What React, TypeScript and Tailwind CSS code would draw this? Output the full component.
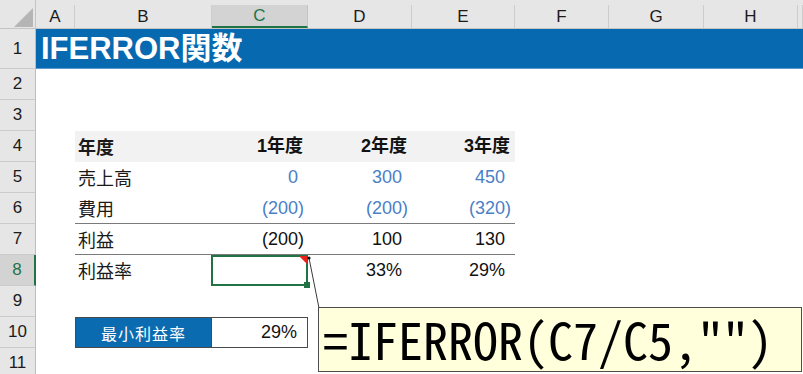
import React from "react";

const colLetters = ["A", "B", "C", "D", "E", "F", "G", "H", ""];
const rowNums = [1, 2, 3, 4, 5, 6, 7, 8, 9, 10, 11];

const sans = "font-['Liberation_Sans','Noto_Sans_CJK_JP',sans-serif]";
const blue = "text-[#4a80c6]";

function Num({ v, className = "" }: { v: string; className?: string }) {
  const neg = v.startsWith("(");
  return (
    <div className={`flex items-center justify-end pr-[4px] text-[18px] ${sans} ${className}`}>
      <span>{v}</span>
      {!neg && <span className="invisible">)</span>}
    </div>
  );
}

function Label({ t, bold = false, className = "" }: { t: string; bold?: boolean; className?: string }) {
  return (
    <div
      className={`flex items-center pl-[3px] text-[18px] text-[#1a1a1a] font-['Noto_Sans_CJK_JP',sans-serif] ${bold ? "font-bold" : "font-normal"} ${className}`}
    >
      {t}
    </div>
  );
}

function Head({ t, className = "" }: { t: string; className?: string }) {
  return (
    <div className={`flex items-center justify-end pr-[5px] text-[18px] font-bold text-[#111] ${sans} ${className}`}>
      {t}
    </div>
  );
}

function Empty() {
  return <div />;
}

function bodyCells(r: number): React.ReactNode[] {
  // columns A..(last): index 0..8
  const cells: React.ReactNode[] = Array.from({ length: 9 }, (_, i) => <Empty key={`e${r}-${i}`} />);
  const k = (c: number) => `c${r}-${c}`;
  if (r === 4) {
    cells[1] = <Label key={k(1)} t="年度" bold className="bg-[#f2f2f2]" />;
    cells[2] = <Head key={k(2)} t="1年度" className="bg-[#f2f2f2]" />;
    cells[3] = <Head key={k(3)} t="2年度" className="bg-[#f2f2f2]" />;
    cells[4] = <Head key={k(4)} t="3年度" className="bg-[#f2f2f2]" />;
  }
  if (r === 5) {
    cells[1] = <Label key={k(1)} t="売上高" />;
    cells[2] = <Num key={k(2)} v="0" className={blue} />;
    cells[3] = <Num key={k(3)} v="300" className={blue} />;
    cells[4] = <Num key={k(4)} v="450" className={blue} />;
  }
  if (r === 6) {
    const b = "border-b border-[#7a7a7a]";
    cells[1] = <Label key={k(1)} t="費用" className={b} />;
    cells[2] = <Num key={k(2)} v="(200)" className={`${blue} ${b}`} />;
    cells[3] = <Num key={k(3)} v="(200)" className={`${blue} ${b}`} />;
    cells[4] = <Num key={k(4)} v="(320)" className={`${blue} ${b}`} />;
  }
  if (r === 7) {
    const b = "border-b border-[#7a7a7a]";
    cells[1] = <Label key={k(1)} t="利益" className={b} />;
    cells[2] = <Num key={k(2)} v="(200)" className={`text-[#111] ${b}`} />;
    cells[3] = <Num key={k(3)} v="100" className={`text-[#111] ${b}`} />;
    cells[4] = <Num key={k(4)} v="130" className={`text-[#111] ${b}`} />;
  }
  if (r === 8) {
    cells[1] = <Label key={k(1)} t="利益率" />;
    cells[2] = (
      <div key={k(2)} className="relative border-2 border-[#217346] -ml-[1px]">
        {/* comment marker */}
        <div className="absolute right-[-1px] top-[-1px] h-0 w-0 border-l-[8px] border-t-[8px] border-l-transparent border-t-[#e8221b]" />
        {/* fill handle */}
        <div className="absolute right-[-4px] bottom-[-4px] h-[6px] w-[6px] bg-[#217346]" />
      </div>
    );
    cells[3] = <Num key={k(3)} v="33%" className="text-[#111]" />;
    cells[4] = <Num key={k(4)} v="29%" className="text-[#111]" />;
  }
  if (r === 10) {
    cells[1] = (
      <div
        key={k(1)}
        className="flex items-center justify-center bg-[#0b6bb1] border border-[#4a4a4a] text-white text-[16px] tracking-[1px] font-['Noto_Sans_CJK_JP',sans-serif]"
      >
        最小利益率
      </div>
    );
    cells[2] = <Num key={k(2)} v="29%" className="text-[#111] border border-l-0 border-[#4a4a4a]" />;
  }
  return cells;
}

export default function App() {
  return (
    <div className="relative w-[803px] h-[374px] overflow-hidden bg-white">
      <div className="grid grid-cols-[36px_39px_137px_96px_104px_103px_94px_95px_94px_1fr] grid-rows-[29px_40px_repeat(10,31px)]">
        {/* corner */}
        <div className="relative bg-[#e6e6e6] border-r border-b border-[#c4c4c4]">
          <svg className="absolute left-[14px] top-[8px]" width="20" height="19" viewBox="0 0 20 19">
            <polygon points="19,0 19,19 0,19" fill="#b5b5b5" />
          </svg>
        </div>
        {/* column headers */}
        {colLetters.map((l, i) => {
          const sel = l === "C";
          return (
            <div key={`h${i}`} className="bg-[#e6e6e6] pt-[5px] border-b border-[#c4c4c4]">
              <div
                className={`h-full flex items-center justify-center text-[17px] ${sans} ${
                  sel
                    ? "bg-[#d3d3d3] text-[#217346] border-b-2 border-[#217346] border-r border-r-[#c4c4c4]"
                    : "text-[#1b1b1b] border-r border-[#cdcdcd]"
                }`}
              >
                {l}
              </div>
            </div>
          );
        })}
        {rowNums.map((r) => {
          const sel = r === 8;
          const header = (
            <div
              key={`rh${r}`}
              className={`flex items-center justify-center text-[17px] ${sans} border-b border-[#cbcbcb] ${
                sel
                  ? "bg-[#d3d3d3] text-[#217346] border-r-2 border-r-[#217346]"
                  : "bg-[#e6e6e6] text-[#1b1b1b] border-r border-r-[#bdbdbd]"
              }`}
            >
              {r}
            </div>
          );
          if (r === 1) {
            return (
              <React.Fragment key={`r${r}`}>
                {header}
                <div className="col-span-9 flex items-center pl-[5px] bg-[#076ab0] border-b border-[#5b9ad0] text-white text-[31px] font-bold leading-none font-['Liberation_Sans','Noto_Sans_CJK_JP',sans-serif]">
                  IFERROR関数
                </div>
              </React.Fragment>
            );
          }
          return (
            <React.Fragment key={`r${r}`}>
              {header}
              {bodyCells(r)}
            </React.Fragment>
          );
        })}
      </div>

      {/* comment leader line */}
      <svg className="absolute left-0 top-0 pointer-events-none" width="803" height="374">
        <line x1="309" y1="258" x2="319" y2="308" stroke="#3a3a3a" strokeWidth="1" />
        <circle cx="309" cy="258" r="1.6" fill="#111" />
      </svg>

      {/* comment note */}
      <div className="absolute left-[318px] top-[307px] w-[484px] h-[65px] bg-[#ffffdc] border border-[#4d4d4d] flex items-center pl-[4px] pb-[3px]">
        <span className="text-[50px] leading-none text-black font-['Noto_Sans_Mono_CJK_JP','DejaVu_Sans_Mono',monospace]">
          =IFERROR(C7/C5,"")
        </span>
      </div>
    </div>
  );
}
